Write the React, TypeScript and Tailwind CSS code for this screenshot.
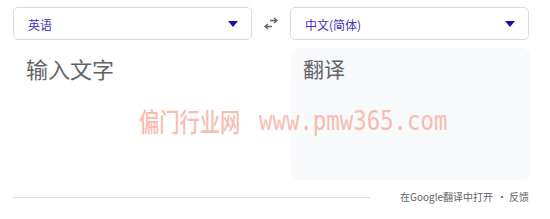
import React from "react";

const cjk = "font-['Noto_Sans_CJK_SC',sans-serif]";

function LangSelect({ label }: { label: string }) {
  return (
    <div className="w-[239px] h-[33px] rounded-[5px] border border-[#dadce0] bg-white flex items-center justify-between pl-[14px] pr-[13px]">
      <span className={`text-[12px] leading-[16px] pt-[2px] text-[#3b33c9] ${cjk}`}>{label}</span>
      <svg width="10" height="6" viewBox="0 0 10 6">
        <path d="M0 0h10L5 6z" fill="#1a0dab" />
      </svg>
    </div>
  );
}

export default function App() {
  return (
    <div className={`relative w-[550px] h-[219px] bg-white ${cjk}`}>
      <div className="pl-[13px] pt-[7px]">
        <div className="flex items-center">
          <LangSelect label="英语" />
          <div className="w-[38px] flex justify-center">
            <svg width="16" height="13" viewBox="0 0 16 13">
              <path d="M11 1l3 2.5-3 2.5M14 3.5H7M5 7l-3 2.5 3 2.5M2 9.5h7" fill="none" stroke="#5f6368" strokeWidth="1.4" />
            </svg>
          </div>
          <LangSelect label="中文(简体)" />
        </div>

        <div className="flex mt-[8px]">
          <div className="w-[278px] pl-[13px] pt-[5px]">
            <span className="text-[22px] leading-[30px] text-[#5f6368]">输入文字</span>
          </div>
          <div className="w-[239px] h-[132px] rounded-[8px] bg-[#f8f9fa] pl-[12px] pt-[5px]">
            <span className="text-[21px] leading-[30px] text-[#5f6368]">翻译</span>
          </div>
        </div>

        <div className="flex items-center mt-[10px] w-[516px] whitespace-nowrap text-[10px] leading-[14px] text-[#5f6368]">
          <div className="w-[357px] shrink-0 h-px bg-[#dadce0]" />
          <span className="ml-[30px]">在Google翻译中打开</span>
          <span className="ml-[4px]">•</span>
          <span className="ml-auto">反馈</span>
        </div>
      </div>

      <div className="absolute left-[139px] top-[101px] flex items-center text-[#f7a190] opacity-70 pointer-events-none">
        <span className="inline-block w-[102px] text-[26px] leading-[40px] font-medium scale-x-[0.78] origin-left whitespace-nowrap">偏门行业网</span>
        <span className="inline-block ml-[18px] text-[26px] leading-[40px] font-['DejaVu_Sans_Mono',monospace] scale-x-[0.86] origin-left whitespace-nowrap">www.pmw365.com</span>
      </div>
    </div>
  );
}
